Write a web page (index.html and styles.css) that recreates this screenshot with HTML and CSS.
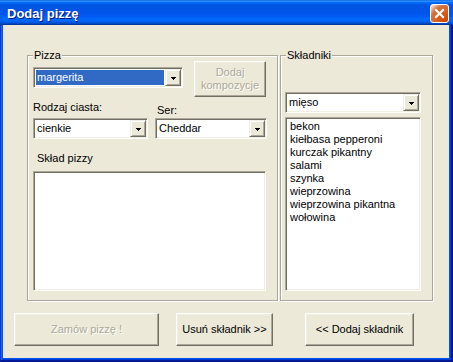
FILE: index.html
```html
<!DOCTYPE html>
<html lang="pl">
<head>
<meta charset="utf-8">
<title>Dodaj pizzę</title>
<link rel="stylesheet" href="styles.css">
</head>
<body>
<div class="window">
  <div class="titlebar">
    <span class="title">Dodaj pizzę</span>
    <span class="close" aria-label="Zamknij">
      <svg width="17" height="17" viewBox="0 0 17 17"><path d="M5 5 L12 12 M12 5 L5 12" stroke="#fff" stroke-width="2.2" stroke-linecap="square"/></svg>
    </span>
  </div>
  <div class="client">
    <div class="groups">
      <div class="group group-pizza">
        <span class="legend">Pizza</span>
        <div class="row-top">
          <div class="combo combo-pizza">
            <span class="value selected">margerita</span>
            <span class="drop"><svg width="5" height="3" viewBox="0 0 5 3"><rect x="0" y="0" width="5" height="1"/><rect x="1" y="1" width="3" height="1"/><rect x="2" y="2" width="1" height="1"/></svg></span>
          </div>
          <button class="btn btn-kompozycja" disabled>Dodaj<br>kompozycje</button>
        </div>
        <div class="row-fields">
          <div class="field field-ciasto">
            <span class="lbl lbl-ciasto">Rodzaj ciasta:</span>
            <div class="combo">
              <span class="value">cienkie</span>
              <span class="drop"><svg width="5" height="3" viewBox="0 0 5 3"><rect x="0" y="0" width="5" height="1"/><rect x="1" y="1" width="3" height="1"/><rect x="2" y="2" width="1" height="1"/></svg></span>
            </div>
          </div>
          <div class="field field-ser">
            <span class="lbl lbl-ser">Ser:</span>
            <div class="combo">
              <span class="value">Cheddar</span>
              <span class="drop"><svg width="5" height="3" viewBox="0 0 5 3"><rect x="0" y="0" width="5" height="1"/><rect x="1" y="1" width="3" height="1"/><rect x="2" y="2" width="1" height="1"/></svg></span>
            </div>
          </div>
        </div>
        <div class="lbl lbl-sklad">Skład pizzy</div>
        <div class="listbox listbox-sklad"></div>
      </div>
      <div class="group group-skladniki">
        <span class="legend">Składniki</span>
        <div class="combo combo-kat">
          <span class="value">mięso</span>
          <span class="drop"><svg width="5" height="3" viewBox="0 0 5 3"><rect x="0" y="0" width="5" height="1"/><rect x="1" y="1" width="3" height="1"/><rect x="2" y="2" width="1" height="1"/></svg></span>
        </div>
        <div class="listbox listbox-skladniki">
          <div class="item">bekon</div>
          <div class="item">kiełbasa pepperoni</div>
          <div class="item">kurczak pikantny</div>
          <div class="item">salami</div>
          <div class="item">szynka</div>
          <div class="item">wieprzowina</div>
          <div class="item">wieprzowina pikantna</div>
          <div class="item">wołowina</div>
        </div>
      </div>
    </div>
    <div class="buttons">
      <button class="btn btn-zamow" disabled>Zamów pizzę !</button>
      <button class="btn btn-usun">Usuń składnik &gt;&gt;</button>
      <button class="btn btn-dodaj">&lt;&lt; Dodaj składnik</button>
    </div>
  </div>
</div>
</body>
</html>
```

FILE: styles.css
```css
* { box-sizing: border-box; }

html, body {
  margin: 0;
  padding: 0;
  background: #ECE9D8;
}

body {
  font-family: "Liberation Sans", Arial, sans-serif;
  font-size: 11px;
  line-height: 13px;
  color: #000;
}

.window {
  width: 453px;
  height: 362px;
  display: flex;
  flex-direction: column;
  background: #0055EA;
  box-shadow: inset -1px -1px #00138C, inset 1px 0 #0831D9, inset -2px -2px #001EA0, inset 2px 0 #166AEE, inset -3px -3px #003BDA;
}

.titlebar {
  height: 25px;
  flex: none;
  display: flex;
  align-items: flex-start;
  justify-content: space-between;
  background: linear-gradient(to bottom, #0058EE 0%, #3593FF 4%, #288EFF 6%, #127DFF 8%, #036FFC 10%, #0262EE 14%, #0057E5 20%, #0054E3 24%, #0055EB 56%, #005BF5 66%, #026AFE 76%, #0062EF 86%, #0052D6 92%, #0040AB 96%, #003092 100%);
}

.title {
  padding: 1px 0 0 7px;
  font-family: "Liberation Sans", Arial, sans-serif;
  font-weight: bold;
  font-size: 13px;
  line-height: 25px;
  color: #fff;
  text-shadow: 1px 1px #0A1883;
  letter-spacing: 0;
}

.close {
  width: 19px;
  height: 19px;
  margin: 4px 4px 0 0;
  border: 1px solid #fff;
  border-radius: 3px;
  display: flex;
  align-items: center;
  justify-content: center;
  background: radial-gradient(circle at 90% 90%, #CC4600 0%, #DC6527 55%, #CD7546 70%, #FFCCB2 90%, #fff 100%);
}

.close svg { display: block; }

.client {
  flex: 1;
  margin: 0 4px 4px 3px;
  background: #ECE9D8;
  display: flex;
  flex-direction: column;
}

.groups {
  display: flex;
  gap: 2px;
  margin: 30px 0 0 24px;
}

.group {
  position: relative;
  height: 246px;
  border: 1px solid #ACA899;
  box-shadow: inset 1px 1px #fff, 1px 1px #fff;
  display: flex;
  flex-direction: column;
  align-items: flex-start;
}

.group-pizza { width: 251px; }
.group-skladniki { width: 153px; }

.legend {
  position: absolute;
  top: -7px;
  left: 5px;
  padding: 0 1px;
  background: #ECE9D8;
  line-height: 13px;
}

.row-top {
  display: flex;
  align-items: flex-start;
  padding: 5px 0 0 5px;
}

.combo {
  height: 21px;
  display: flex;
  border: 1px solid;
  border-color: #ACA899 #fff #fff #ACA899;
  padding: 1px;
  background: #fff;
  box-shadow: inset 1px 1px #716F64, inset -1px -1px #F1EFE2;
}

.combo-pizza {
  width: 150px;
  margin-top: 6px;
}

.value {
  flex: 1;
  line-height: 17px;
  padding-left: 2px;
  white-space: nowrap;
  overflow: hidden;
}

.value.selected {
  margin: 1px;
  padding-left: 1px;
  line-height: 15px;
  background: #316AC5;
  color: #fff;
}

.drop {
  width: 16px;
  height: 17px;
  flex: none;
  display: flex;
  align-items: center;
  justify-content: center;
  background: #ECE9D8;
  border: 1px solid;
  border-color: #F1EFE2 #716F64 #716F64 #F1EFE2;
  box-shadow: inset 1px 1px #fff, inset -1px -1px #ACA899;
}

.drop svg {
  display: block;
  fill: #000;
  margin-top: 1px;
}

.btn {
  font-family: "Liberation Sans", Arial, sans-serif;
  font-size: 11px;
  line-height: 13px;
  color: #000;
  background: #ECE9D8;
  border: 1px solid;
  border-color: #fff #716F64 #716F64 #fff;
  box-shadow: inset -1px -1px #ACA899, inset 1px 1px #F1EFE2;
  border-radius: 0;
  padding: 0;
  margin: 0;
  text-align: center;
}

.btn:disabled {
  color: #ACA899;
  text-shadow: 1px 1px #fff;
}

.btn-kompozycja {
  width: 72px;
  height: 36px;
  margin-left: 11px;
}

.row-fields {
  display: flex;
  gap: 7px;
  padding-left: 5px;
}

.field {
  display: flex;
  flex-direction: column;
  align-items: stretch;
}

.field-ciasto { width: 115px; }
.field-ser { width: 112px; }

.lbl {
  line-height: 13px;
  white-space: nowrap;
}

.lbl-ciasto { margin: 4px 0 4px 0; }
.lbl-ser { margin: 7px 0 1px 2px; }

.lbl-sklad { margin: 13px 0 0 9px; }

.listbox {
  background: #fff;
  border: 1px solid;
  border-color: #ACA899 #fff #fff #ACA899;
  padding: 2px 1px 1px 4px;
  box-shadow: inset 1px 1px #716F64, inset -1px -1px #F1EFE2;
}

.listbox-sklad {
  width: 233px;
  height: 120px;
  margin: 6px 0 0 5px;
}

.combo-kat {
  width: 136px;
  margin: 36px 0 0 4px;
}

.listbox-skladniki {
  width: 136px;
  height: 174px;
  margin: 4px 0 0 4px;
}

.item {
  line-height: 13px;
  white-space: nowrap;
}

.buttons {
  display: flex;
  margin-top: 12px;
}

.buttons .btn { height: 33px; }

.btn-zamow { width: 145px; margin-left: 11px; }
.btn-usun { width: 97px; margin-left: 17px; }
.btn-dodaj { width: 109px; margin-left: 32px; }
```
